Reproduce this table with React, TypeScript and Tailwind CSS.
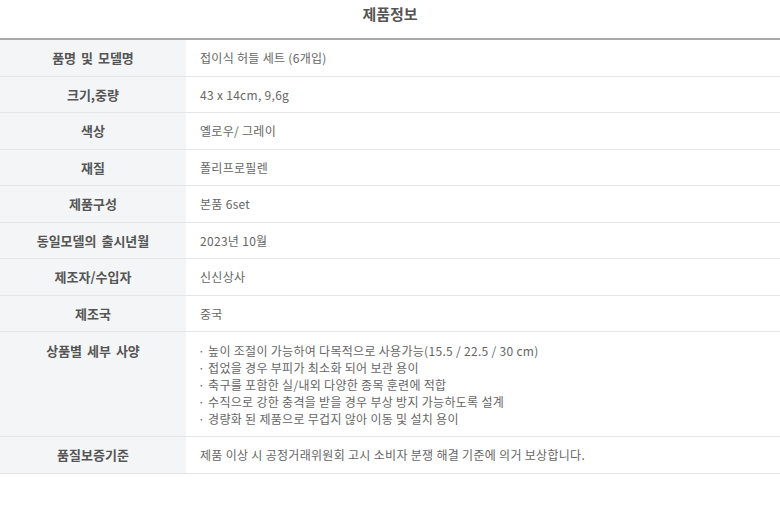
import React from "react";

const font = { fontFamily: '"Noto Sans CJK KR", "Noto Sans", sans-serif' };

const bullets = [
  "높이 조절이 가능하여 다목적으로 사용가능(15.5 / 22.5 / 30 cm)",
  "접었을 경우 부피가 최소화 되어 보관 용이",
  "축구를 포함한 실/내외 다양한 종목 훈련에 적합",
  "수직으로 강한 충격을 받을 경우 부상 방지 가능하도록 설계",
  "경량화 된 제품으로 무겁지 않아 이동 및 설치 용이",
];

const rows: { label: string; value: React.ReactNode; tall?: boolean }[] = [
  { label: "품명 및 모델명", value: "접이식 허들 세트 (6개입)" },
  { label: "크기,중량", value: "43 x 14cm, 9,6g" },
  { label: "색상", value: "옐로우/ 그레이" },
  { label: "재질", value: "폴리프로필렌" },
  { label: "제품구성", value: "본품 6set" },
  { label: "동일모델의 출시년월", value: "2023년 10월" },
  { label: "제조자/수입자", value: "신신상사" },
  { label: "제조국", value: "중국" },
  {
    label: "상품별 세부 사양",
    tall: true,
    value: (
      <div className="flex flex-col leading-[17px]">
        {bullets.map((b, i) => (
          <div key={i} className="flex">
            <span className="-ml-[2px] mr-[3px]">·</span>
            <span>{b}</span>
          </div>
        ))}
      </div>
    ),
  },
  { label: "품질보증기준", value: "제품 이상 시 공정거래위원회 고시 소비자 분쟁 해결 기준에 의거 보상합니다." },
];

export default function App() {
  return (
    <div className="w-[780px] h-[513px] bg-white" style={font}>
      <div className="h-[38px] flex justify-center pt-[4px]">
        <span className="text-[15px] font-bold text-[#555] leading-[20px]">제품정보</span>
      </div>
      <div className="border-t-2 border-[#a9a9a9]">
        {rows.map((r, i) => (
          <div key={i} className="flex border-b border-[#e6e6e6]">
            <div
              className={`w-[186px] shrink-0 bg-[#f4f5f7] flex justify-center text-[13px] font-bold text-[#555] [word-spacing:2px] ${
                r.tall ? "pt-[10px] pb-[9px] leading-[17px]" : "items-center py-[10px] leading-[15.5px]"
              }`}
            >
              {r.label}
            </div>
            <div
              className={`flex-1 pl-[14px] text-[12px] text-[#666] tracking-[0.3px] ${
                r.tall ? "pt-[10px] pb-[9px]" : "flex items-center py-[10px] leading-[15.5px]"
              }`}
            >
              {r.value}
            </div>
          </div>
        ))}
      </div>
    </div>
  );
}
